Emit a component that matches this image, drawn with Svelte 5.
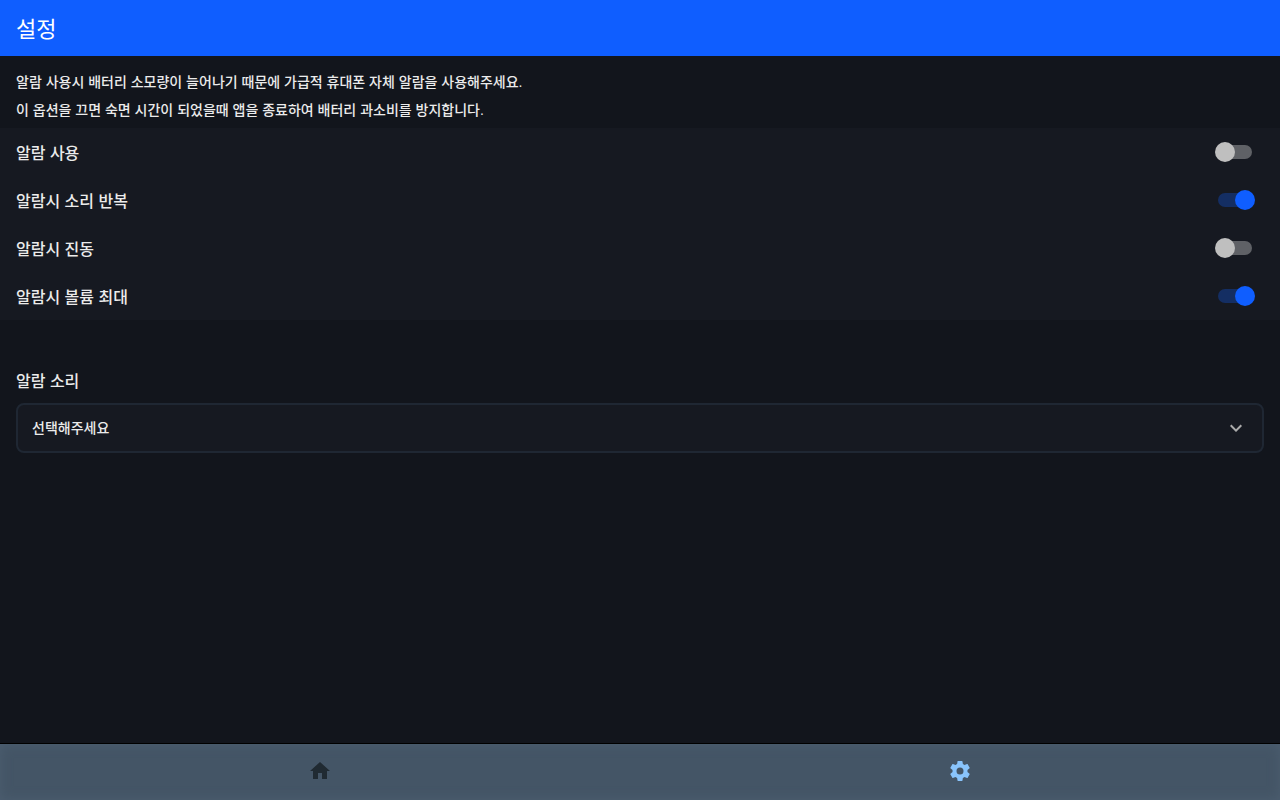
<script>
	let options = [
		{ id: 'use', label: '알람 사용', checked: false },
		{ id: 'repeat', label: '알람시 소리 반복', checked: true },
		{ id: 'vibrate', label: '알람시 진동', checked: false },
		{ id: 'volume', label: '알람시 볼륨 최대', checked: true }
	];

	let sound = '';
</script>

<div class="app">
	<header class="app-bar">
		<h1>설정</h1>
	</header>

	<main>
		<div class="notice">
			<p>알람 사용시 배터리 소모량이 늘어나기 때문에 가급적 휴대폰 자체 알람을 사용해주세요.</p>
			<p>이 옵션을 끄면 숙면 시간이 되었을때 앱을 종료하여 배터리 과소비를 방지합니다.</p>
		</div>

		<div class="options">
			{#each options as option (option.id)}
				<div class="option">
					<label for={option.id}>{option.label}</label>
					<input id={option.id} class="switch" type="checkbox" role="switch" bind:checked={option.checked} />
				</div>
			{/each}
		</div>

		<div class="field">
			<label for="sound">알람 소리</label>
			<div class="select-box">
				<select id="sound" bind:value={sound}>
					<option value="">선택해주세요</option>
				</select>
				<svg class="chevron" viewBox="0 0 24 24" aria-hidden="true">
					<path d="M7.41 8.59 12 13.17l4.59-4.58L18 10l-6 6-6-6z" />
				</svg>
			</div>
		</div>
	</main>

	<nav>
		<a href="#home" aria-label="홈">
			<svg viewBox="0 0 24 24"><path d="M10 20v-6h4v6h5v-8h3L12 3 2 12h3v8z" /></svg>
		</a>
		<a href="#settings" class="active" aria-label="설정">
			<svg viewBox="0 0 24 24">
				<path d="M12 15.5A3.5 3.5 0 0 1 8.5 12 3.5 3.5 0 0 1 12 8.5a3.5 3.5 0 0 1 3.5 3.5 3.5 3.5 0 0 1-3.5 3.5m7.43-2.53c.04-.32.07-.64.07-.97s-.03-.66-.07-1l2.11-1.63c.19-.15.24-.42.12-.64l-2-3.46c-.12-.22-.39-.31-.61-.22l-2.49 1c-.52-.39-1.06-.73-1.69-.98l-.37-2.65A.506.506 0 0 0 14 2h-4c-.25 0-.46.18-.5.42l-.37 2.65c-.63.25-1.17.59-1.69.98l-2.49-1c-.22-.09-.49 0-.61.22l-2 3.46c-.13.22-.07.49.12.64L4.57 11c-.04.34-.07.67-.07 1s.03.65.07.97l-2.11 1.66c-.19.15-.25.42-.12.64l2 3.46c.12.22.39.3.61.22l2.49-1.01c.52.4 1.06.74 1.69.99l.37 2.65c.04.24.25.42.5.42h4c.25 0 .46-.18.5-.42l.37-2.65c.63-.26 1.17-.59 1.69-.99l2.49 1.01c.22.08.49 0 .61-.22l2-3.46c.12-.22.07-.49-.12-.64z" />
			</svg>
		</a>
	</nav>
</div>

<style>
	:global(body) {
		margin: 0;
		background: #12151c;
	}

	.app {
		display: flex;
		flex-direction: column;
		min-height: 100vh;
		background: #12151c;
		color: #ebebeb;
		font-family: 'Liberation Sans', 'Noto Sans CJK KR', sans-serif;
		font-weight: 500;
	}

	.app-bar {
		display: flex;
		align-items: center;
		height: 56px;
		padding: 0 16px;
		background: #0f5eff;
		color: #fff;
	}

	h1 {
		margin: 0;
		padding-top: 4px;
		font-size: 22px;
		font-weight: 400;
		line-height: 32px;
	}

	main {
		flex: 1;
	}

	.notice {
		padding: 12px 16px 4px;
		font-size: 14px;
		line-height: 28px;
	}

	.notice p {
		margin: 0;
	}

	.options {
		background: #161921;
	}

	.option {
		display: flex;
		align-items: center;
		justify-content: space-between;
		height: 48px;
		padding: 0 25px 0 16px;
		font-size: 16px;
		line-height: 24px;
	}

	.option label {
		padding-top: 4px;
	}

	.switch {
		appearance: none;
		position: relative;
		width: 40px;
		height: 20px;
		margin: 0;
		cursor: pointer;
	}

	.switch::before {
		content: '';
		position: absolute;
		inset: 3px;
		border-radius: 7px;
		background: #5f6166;
	}

	.switch::after {
		content: '';
		position: absolute;
		top: 0;
		left: 0;
		width: 20px;
		height: 20px;
		border-radius: 50%;
		background: #bfbfbf;
	}

	.switch:checked::before {
		background: #142e63;
	}

	.switch:checked::after {
		left: 20px;
		background: #0f5eff;
	}

	.field {
		display: flex;
		flex-direction: column;
		gap: 9px;
		padding: 50px 16px 16px;
		font-size: 16px;
		line-height: 24px;
	}

	.select-box {
		display: grid;
		align-items: center;
	}

	select {
		grid-area: 1 / 1;
		appearance: none;
		width: 100%;
		height: 50px;
		padding: 0 48px 0 14px;
		border: 2px solid #1f2733;
		border-radius: 8px;
		background: #161921;
		color: inherit;
		font: inherit;
		font-size: 14px;
	}

	.chevron {
		grid-area: 1 / 1;
		justify-self: end;
		width: 24px;
		height: 24px;
		margin-right: 16px;
		fill: #ababab;
		pointer-events: none;
	}

	nav {
		display: flex;
		box-sizing: border-box;
		height: 57px;
		padding-bottom: 2px;
		border-top: 1px solid #000;
		background: #445566;
		box-shadow: inset 0 0 12px #4c5e70;
	}

	nav a {
		flex: 1;
		display: flex;
		align-items: center;
		justify-content: center;
		color: #202a32;
	}

	nav a.active {
		color: #89c4fc;
	}

	nav svg {
		width: 24px;
		height: 24px;
		fill: currentColor;
	}
</style>
